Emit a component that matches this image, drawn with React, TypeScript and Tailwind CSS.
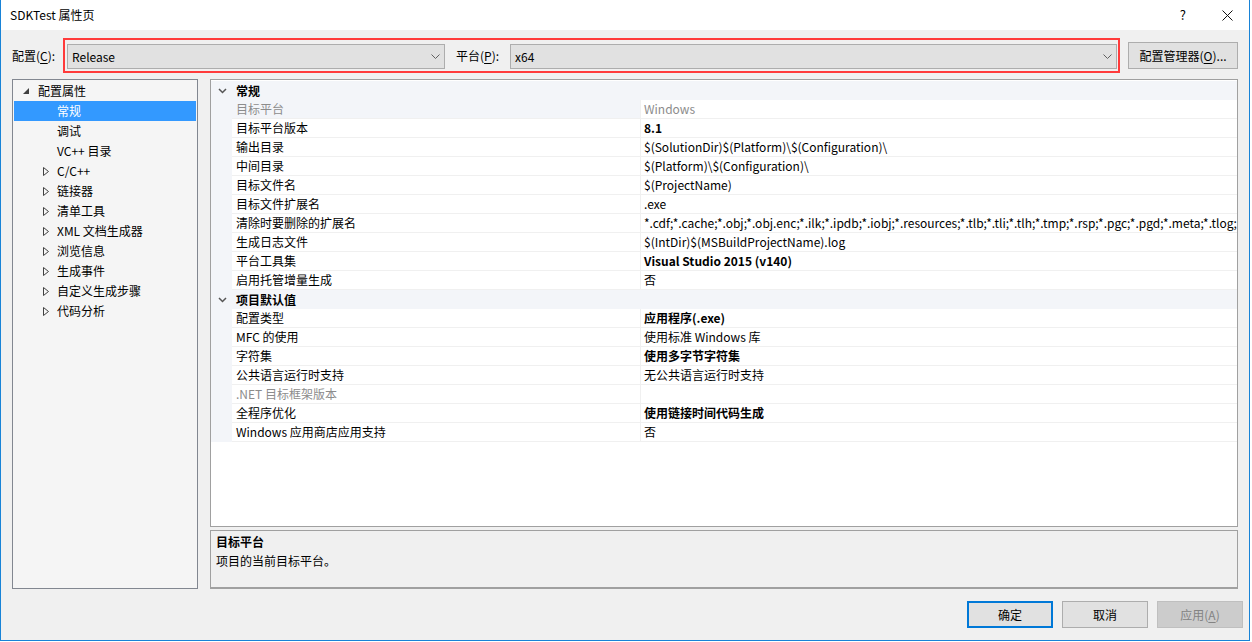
import type { ReactNode } from "react"

type Prop = {
  name: string
  value: string
  bold?: boolean
  muted?: boolean
  selected?: boolean
}

const GENERAL: Prop[] = [
  { name: "目标平台", value: "Windows", muted: true, selected: true },
  { name: "目标平台版本", value: "8.1", bold: true },
  { name: "输出目录", value: "$(SolutionDir)$(Platform)\\$(Configuration)\\" },
  { name: "中间目录", value: "$(Platform)\\$(Configuration)\\" },
  { name: "目标文件名", value: "$(ProjectName)" },
  { name: "目标文件扩展名", value: ".exe" },
  {
    name: "清除时要删除的扩展名",
    value:
      "*.cdf;*.cache;*.obj;*.obj.enc;*.ilk;*.ipdb;*.iobj;*.resources;*.tlb;*.tli;*.tlh;*.tmp;*.rsp;*.pgc;*.pgd;*.meta;*.tlog;",
  },
  { name: "生成日志文件", value: "$(IntDir)$(MSBuildProjectName).log" },
  { name: "平台工具集", value: "Visual Studio 2015 (v140)", bold: true },
  { name: "启用托管增量生成", value: "否" },
]

const DEFAULTS: Prop[] = [
  { name: "配置类型", value: "应用程序(.exe)", bold: true },
  { name: "MFC 的使用", value: "使用标准 Windows 库" },
  { name: "字符集", value: "使用多字节字符集", bold: true },
  { name: "公共语言运行时支持", value: "无公共语言运行时支持" },
  { name: ".NET 目标框架版本", value: "", muted: true },
  { name: "全程序优化", value: "使用链接时间代码生成", bold: true },
  { name: "Windows 应用商店应用支持", value: "否" },
]

const TREE: { label: string; folder?: boolean; selected?: boolean }[] = [
  { label: "常规", selected: true },
  { label: "调试" },
  { label: "VC++ 目录" },
  { label: "C/C++", folder: true },
  { label: "链接器", folder: true },
  { label: "清单工具", folder: true },
  { label: "XML 文档生成器", folder: true },
  { label: "浏览信息", folder: true },
  { label: "生成事件", folder: true },
  { label: "自定义生成步骤", folder: true },
  { label: "代码分析", folder: true },
]

const Key = ({ children }: { children: ReactNode }) => (
  <span className="underline underline-offset-[2px]">{children}</span>
)

const ComboArrow = () => (
  <svg width="9" height="5" viewBox="0 0 9 5" className="shrink-0">
    <path d="M0.5 0.5 L4.5 4.5 L8.5 0.5" fill="none" stroke="#606060" strokeWidth="1" />
  </svg>
)

const Combo = ({ value, className }: { value: string; className?: string }) => (
  <div
    className={`flex h-[25px] items-center justify-between border border-[#adadad] bg-[#e1e1e1] pr-[4px] pl-[4px] ${className ?? ""}`}
  >
    <span>{value}</span>
    <ComboArrow />
  </div>
)

const CategoryRow = ({ label }: { label: string }) => (
  <div className="flex h-[19px] items-center bg-[#f3f5f9]">
    <div className="flex w-[21px] justify-center pl-[2px]">
      <svg width="9" height="6" viewBox="0 0 9 6">
        <path d="M1 1 L4.5 4.5 L8 1" fill="none" stroke="#555" strokeWidth="1.5" />
      </svg>
    </div>
    <span className="pl-[4px] font-bold">{label}</span>
  </div>
)

const PropRow = ({ p }: { p: Prop }) => (
  <div className="flex h-[19px]">
    <div className="w-[21px] shrink-0 bg-[#f3f5f9]" />
    <div
      className={`flex w-[408px] shrink-0 items-center border-b border-[#f0f0f0] pl-[4px] ${p.selected ? "bg-[#f3f5f9]" : "bg-white"} ${p.muted ? "text-[#8c8c8c]" : ""}`}
    >
      {p.name}
    </div>
    <div
      className={`flex min-w-0 flex-1 items-center overflow-hidden border-b border-l border-[#f0f0f0] bg-white pl-[3px] whitespace-nowrap ${p.bold ? "font-bold" : ""} ${p.muted ? "text-[#8c8c8c]" : ""}`}
    >
      {p.value}
    </div>
  </div>
)

const TreeArrow = () => (
  <svg width="6" height="9" viewBox="0 0 6 9" className="shrink-0">
    <path d="M0.5 0.5 L5.5 4.5 L0.5 8.5 Z" fill="none" stroke="#404040" strokeWidth="1" />
  </svg>
)

const Button = ({
  children,
  variant = "normal",
}: {
  children: ReactNode
  variant?: "default" | "normal" | "disabled"
}) => {
  const look =
    variant === "default"
      ? "border-2 border-[#0078d7] bg-[#e1e1e1] text-black"
      : variant === "disabled"
        ? "border border-[#bfbfbf] bg-[#cccccc] text-[#838383]"
        : "border border-[#adadad] bg-[#e1e1e1] text-black"
  return (
    <div className={`flex h-[27px] w-[86px] items-center justify-center ${look}`}>
      {children}
    </div>
  )
}

export default function App() {
  return (
    <div className="h-[642px] w-[1252px] overflow-hidden bg-white font-['Noto_Sans_CJK_SC',sans-serif] text-[12px] leading-[18px] text-black">
      <div className="flex h-[641px] w-[1250px] flex-col border-r border-b border-l border-[#1883d7]">
        {/* title bar */}
        <div className="flex h-[30px] shrink-0 items-center bg-white pl-[9px]">
          <span className="flex-1">SDKTest 属性页</span>
          <span className="mr-[36px] text-[13px]">?</span>
          <svg width="11" height="11" viewBox="0 0 11 11" className="mr-[16px]">
            <path d="M0.5 0.5 L10.5 10.5 M10.5 0.5 L0.5 10.5" stroke="#111" strokeWidth="1" />
          </svg>
        </div>

        <div className="flex flex-1 flex-col bg-[#f0f0f0] pt-[8px] pr-[11px] pl-[11px]">
          {/* configuration / platform selectors */}
          <div className="flex h-[35px] items-center">
            <span className="w-[51px] shrink-0">
              配置(<Key>C</Key>):
            </span>
            <div className="flex h-[35px] w-[1058px] items-start border-2 border-[#ff3b3b] pt-[4px] pr-[1px] pl-[2px]">
              <Combo value="Release" className="w-[378px]" />
              <span className="w-[65px] shrink-0 pt-[3px] pl-[11px]">
                平台(<Key>P</Key>):
              </span>
              <Combo value="x64" className="flex-1" />
            </div>
            <div className="ml-[8px] flex h-[27px] w-[110px] items-center justify-center border border-[#adadad] bg-[#e1e1e1]">
              配置管理器(<Key>O</Key>)...
            </div>
          </div>

          {/* tree + property grid */}
          <div className="mt-[6px] flex h-[510px] gap-[12px]">
            <div className="w-[186px] shrink-0 border border-[#828790] bg-[#f5f5f5] p-[1px]">
              <div className="flex h-[20px] items-center pl-[9px]">
                <svg width="6" height="6" viewBox="0 0 6 6" className="shrink-0">
                  <path d="M6 0 L6 6 L0 6 Z" fill="#404040" />
                </svg>
                <span className="pl-[9px]">配置属性</span>
              </div>
              {TREE.map((item) => (
                <div
                  key={item.label}
                  className={`flex h-[20px] items-center pl-[29px] ${item.selected ? "bg-[#3399ff] text-white" : ""}`}
                >
                  <span className="flex w-[14px] shrink-0">{item.folder && <TreeArrow />}</span>
                  <span>{item.label}</span>
                </div>
              ))}
            </div>

            <div className="flex min-w-0 flex-1 flex-col gap-[3px]">
              <div className="h-[448px] overflow-hidden border border-[#a0a0a0] bg-white pt-[1px]">
                <CategoryRow label="常规" />
                {GENERAL.map((p) => (
                  <PropRow key={p.name} p={p} />
                ))}
                <CategoryRow label="项目默认值" />
                {DEFAULTS.map((p) => (
                  <PropRow key={p.name} p={p} />
                ))}
              </div>
              <div className="flex-1 border border-b-[2px] border-[#a0a0a0] bg-[#f0f0f0] pt-[2px] pl-[5px]">
                <div className="font-bold">目标平台</div>
                <div className="pt-[1px]">项目的当前目标平台。</div>
              </div>
            </div>
          </div>

          {/* dialog buttons */}
          <div className="mt-[12px] mr-[-5px] flex justify-end gap-[9px]">
            <Button variant="default">确定</Button>
            <Button>取消</Button>
            <Button variant="disabled">
              应用(<Key>A</Key>)
            </Button>
          </div>
        </div>
      </div>
    </div>
  )
}
